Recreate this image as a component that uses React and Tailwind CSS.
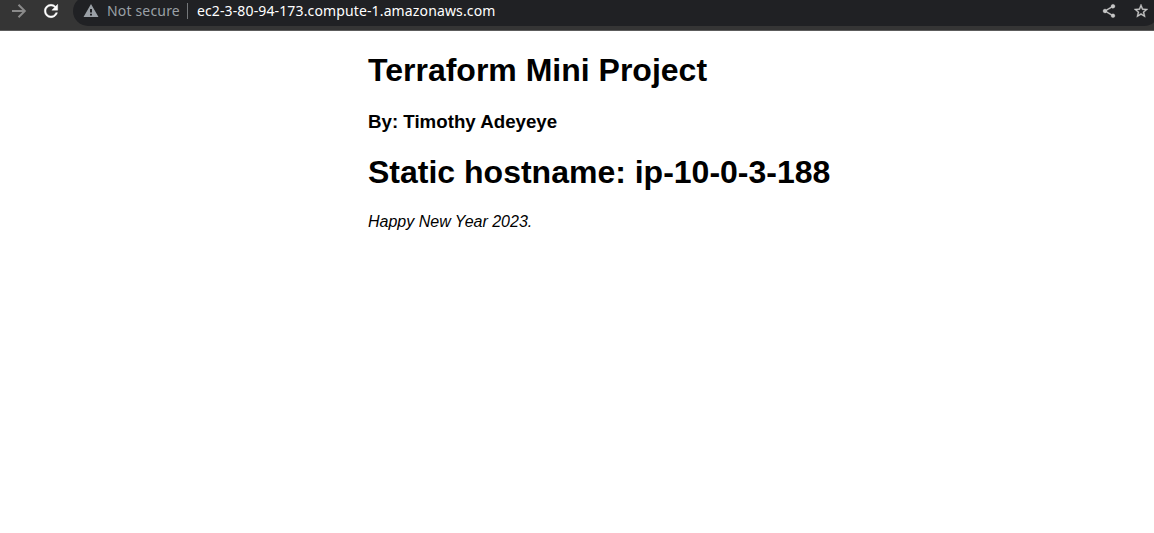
function ForwardIcon() {
  return (
    <svg className="size-5 shrink-0" viewBox="0 0 20 20" fill="none" stroke="#8a8a8a" strokeWidth="2">
      <path d="M3 10h13M9.5 3.7l6.3 6.3-6.3 6.3" />
    </svg>
  );
}

function ReloadIcon() {
  return (
    <svg className="size-5 shrink-0" viewBox="0 0 24 24" fill="#ffffff" stroke="#ffffff" strokeWidth="0.5">
      <path d="M17.65 6.35C16.2 4.9 14.21 4 12 4c-4.42 0-7.99 3.58-7.99 8s3.57 8 7.99 8c3.73 0 6.84-2.55 7.73-6h-2.08c-.82 2.33-3.04 4-5.65 4-3.31 0-6-2.69-6-6s2.69-6 6-6c1.66 0 3.14.69 4.22 1.78L13 11h7V4l-2.35 2.35z" />
    </svg>
  );
}

function WarningIcon() {
  return (
    <svg className="size-4 shrink-0" viewBox="0 0 16 16" fill="#9aa0a6">
      <path fillRule="evenodd" d="M.5 14h15L8 1zM7 6h2v3.5H7zM7 10.7h2v1.8H7z" />
    </svg>
  );
}

function ShareIcon() {
  return (
    <svg className="size-4 shrink-0" viewBox="0 0 24 24" fill="#c6c6c6" stroke="#c6c6c6" strokeWidth="0.4">
      <path d="M18 16.08c-.76 0-1.44.3-1.96.77L8.91 12.7c.05-.23.09-.46.09-.7s-.04-.47-.09-.7l7.05-4.11c.54.5 1.25.81 2.04.81 1.66 0 3-1.34 3-3s-1.34-3-3-3-3 1.34-3 3c0 .24.04.47.09.7L8.04 9.81C7.5 9.31 6.79 9 6 9c-1.66 0-3 1.34-3 3s1.34 3 3 3c.79 0 1.5-.31 2.04-.81l7.12 4.16c-.05.21-.08.43-.08.65 0 1.61 1.31 2.92 2.92 2.92s2.92-1.31 2.92-2.92-1.31-2.92-2.92-2.92z" />
    </svg>
  );
}

function StarIcon() {
  return (
    <svg className="size-4 shrink-0" viewBox="0.5 0.5 23 23" fill="#c6c6c6" stroke="#c6c6c6" strokeWidth="0.5">
      <path d="M22 9.24l-7.19-.62L12 2 9.19 8.63 2 9.24l5.46 4.73L5.82 21 12 17.27 18.18 21l-1.63-7.03L22 9.24zM12 15.4l-3.76 2.27 1-4.28-3.32-2.88 4.38-.38L12 6.1l1.71 4.04 4.38.38-3.32 2.88 1 4.28L12 15.4z" />
    </svg>
  );
}

function Toolbar() {
  return (
    <header className="flex h-[31px] items-start overflow-hidden border-b border-[#5c5c5c] bg-[#353535]">
      <div className="-mt-1 flex h-[30px] shrink-0 items-center gap-3 pl-[9px]">
        <ForwardIcon />
        <ReloadIcon />
      </div>
      <div className="-mt-1 ml-3 flex h-[30px] w-[1086px] shrink-0 items-center rounded-full bg-[#202124] pr-[10px] pl-[10px] font-['Noto_Sans',sans-serif] text-sm">
        <WarningIcon />
        <span className="ml-2 tracking-[0.17px] text-[#9aa0a6]">Not secure</span>
        <span className="ml-[7px] h-4 w-px bg-[#74777a]" />
        <span className="ml-[9px] tracking-[0.135px] text-white">ec2-3-80-94-173.compute-1.amazonaws.com</span>
        <div className="ml-auto flex items-center gap-4">
          <ShareIcon />
          <StarIcon />
        </div>
      </div>
    </header>
  );
}

export default function App() {
  return (
    <div className="h-screen overflow-hidden bg-white">
      <Toolbar />
      <main className="flex flex-col gap-[21.44px] pt-[21.44px] pl-[368px] font-['Liberation_Sans',Arial,sans-serif] text-black">
        <h1 className="text-[32px] leading-[normal] font-bold">Terraform Mini Project</h1>
        <h3 className="text-[18.72px] leading-[normal] font-bold">By: Timothy Adeyeye</h3>
        <h1 className="text-[32px] leading-[normal] font-bold">Static hostname: ip-10-0-3-188</h1>
        <p className="text-base leading-[normal] italic">Happy New Year 2023.</p>
      </main>
    </div>
  );
}
